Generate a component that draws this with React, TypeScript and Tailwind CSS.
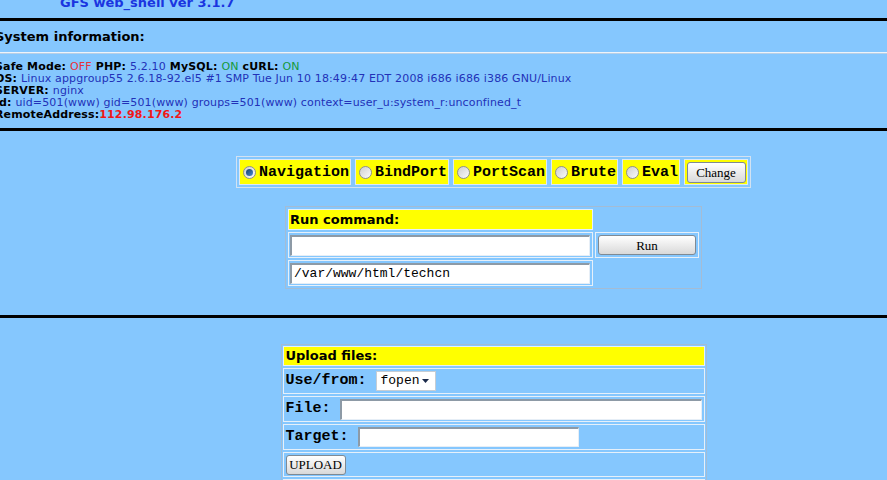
import React from "react";

const sans = "font-['DejaVu_Sans',Verdana,sans-serif]";
const mono = "font-['Liberation_Mono',monospace]";
const serif = "font-['Liberation_Serif',serif]";

function Radio({ checked }: { checked?: boolean }) {
  return (
    <span className="relative inline-flex h-[13px] w-[13px] shrink-0 items-center justify-center rounded-full border border-[#8e8f8f] bg-gradient-to-br from-[#cfcfcf] to-[#fbfbfb]">
      {checked && (
        <span className="h-[7px] w-[7px] rounded-full bg-gradient-to-br from-[#17406e] to-[#4a8ad0]" />
      )}
    </span>
  );
}

function Tab({ label, checked }: { label: string; checked?: boolean }) {
  return (
    <div className="flex h-[26px] items-center gap-[3px] border border-[#dce9f6] bg-[#ffff00] pl-[3px] pr-[1px]">
      <Radio checked={checked} />
      <span className={`${mono} text-[15px] font-bold leading-none text-black`}>{label}</span>
    </div>
  );
}

function Btn({ children, className = "" }: { children: React.ReactNode; className?: string }) {
  return (
    <button
      className={`${serif} flex items-center justify-center rounded-[3px] border border-[#7f8a94] bg-gradient-to-b from-[#ffffff] to-[#d9d9d9] text-[13px] leading-none text-black ${className}`}
    >
      {children}
    </button>
  );
}

function Field({ className = "", value = "" }: { className?: string; value?: string }) {
  return (
    <div
      className={`${mono} flex items-center border-t-2 border-l-2 border-b border-r border-t-[#8d9aa6] border-l-[#8d9aa6] border-b-[#e6eef6] border-r-[#e6eef6] bg-white pl-[2px] text-[13px] text-black ${className}`}
    >
      {value}
    </div>
  );
}

export default function App() {
  return (
    <div className={`${sans} h-[480px] w-full overflow-hidden bg-[#85c7fe]`}>
      {/* header */}
      <div className="h-[18px] overflow-hidden pl-[60px]">
        <div className="-mt-[4px] text-[13px] font-bold leading-[14px] text-[#1a35e0]">GFS web_shell ver 3.1.7</div>
      </div>
      <div className="h-[3px] bg-black" />
      <div className="-ml-[5px] flex h-[31px] items-center text-[13px] font-bold text-black">System information:</div>
      <div className="h-[2px] border-t border-[#eef4fa] bg-[#b7cfe6]" />

      {/* info */}
      <div className="-ml-[5px] pt-[7px] pb-[7px] text-[11px] leading-[12px] tracking-[0.14px] text-[#2231b8]">
        <div>
          <b className="text-black">Safe Mode: </b>
          <span className="text-[#e8313a]">OFF</span>
          <b className="text-black"> PHP: </b>5.2.10
          <b className="text-black"> MySQL: </b>
          <span className="text-[#15993c]">ON</span>
          <b className="text-black"> cURL: </b>
          <span className="text-[#15993c]">ON</span>
        </div>
        <div>
          <b className="text-black">OS: </b>Linux appgroup55 2.6.18-92.el5 #1 SMP Tue Jun 10 18:49:47 EDT 2008 i686 i686 i386 GNU/Linux
        </div>
        <div>
          <b className="text-black">SERVER: </b>nginx
        </div>
        <div>
          <b className="text-black">id: </b>uid=501(www) gid=501(www) groups=501(www) context=user_u:system_r:unconfined_t
        </div>
        <div>
          <b className="text-black">RemoteAddress:</b>
          <b className="text-[#f01818]">112.98.176.2</b>
        </div>
      </div>
      <div className="h-[3px] bg-black" />

      {/* centered area */}
      <div className="flex w-[987px] flex-col items-center">
        {/* mode bar */}
        <div className="mt-[25px] flex gap-[4px] border border-[#d2e2f2] p-[2px]">
          <Tab label="Navigation" checked />
          <Tab label="BindPort" />
          <Tab label="PortScan" />
          <Tab label="Brute" />
          <Tab label="Eval" />
          <div className="flex h-[26px] w-[64px] items-center justify-center border border-[#dce9f6] bg-[#ffff00]">
            <Btn className="h-[21px] w-[59px]">Change</Btn>
          </div>
        </div>

        {/* run command */}
        <div className="mt-[18px] grid grid-cols-[305px_104px] grid-rows-[21px_26px_26px] gap-[2px] border border-[#a4bcd4] p-[2px]">
          <div className="flex items-center border border-[#e6f0fa] bg-[#ffff00] pl-[1px] text-[13px] font-bold text-black">Run command:</div>
          <div />
          <div className="flex items-center border border-[#e6f0fa] px-[1px]">
            <Field className="h-[21px] w-[300px]" />
          </div>
          <div className="flex items-center justify-center border border-[#e6f0fa]">
            <Btn className="h-[20px] w-[98px]">Run</Btn>
          </div>
          <div className="flex items-center border border-[#e6f0fa] px-[1px]">
            <Field className="h-[21px] w-[300px]" value="/var/www/html/techcn" />
          </div>
          <div />
        </div>

        <div className="mt-[26px] h-[3px] w-[887px] self-start bg-black" />

        {/* upload */}
        <div className="mt-[26px] flex w-[426px] flex-col gap-[2px] border border-[#a4bcd4] p-[1px]">
          <div className="flex h-[20px] items-center border border-[#e6f0fa] bg-[#ffff00] pl-[2px] text-[13px] font-bold text-black">Upload files:</div>
          <div className={`${mono} flex h-[26px] items-center border border-[#e6f0fa] pl-[2px] text-[15px] font-bold text-black`}>
            <span className="w-[90px] whitespace-pre">Use/from: </span>
            <div className="flex h-[20px] w-[60px] items-center justify-between border border-[#c6cdd4] bg-white pl-[4px] pr-[6px] text-[13px] font-normal">
              <span>fopen</span>
              <svg width="7" height="4" viewBox="0 0 7 4">
                <path d="M0 0h7L3.5 4z" fill="#1a2a4a" />
              </svg>
            </div>
          </div>
          <div className={`${mono} flex h-[26px] items-center border border-[#e6f0fa] pl-[2px] text-[15px] font-bold text-black`}>
            <span className="w-[54px] whitespace-pre">File: </span>
            <Field className="h-[21px] w-[362px]" />
          </div>
          <div className={`${mono} flex h-[26px] items-center border border-[#e6f0fa] pl-[2px] text-[15px] font-bold text-black`}>
            <span className="w-[72px] whitespace-pre">Target: </span>
            <Field className="h-[20px] w-[221px]" />
          </div>
          <div className="flex h-[25px] items-center border border-[#e6f0fa] pl-[2px]">
            <Btn className="h-[20px] w-[60px]">UPLOAD</Btn>
          </div>
          <div className="h-[26px] border border-[#e6f0fa]" />
        </div>
      </div>
    </div>
  );
}
